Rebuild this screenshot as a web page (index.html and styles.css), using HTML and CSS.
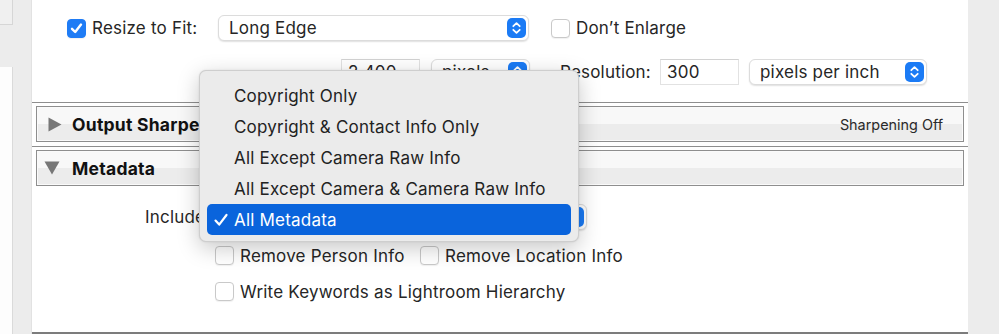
FILE: index.html
```html
<!DOCTYPE html>
<html>
<head>
<meta charset="utf-8">
<link rel="stylesheet" href="styles.css">
</head>
<body>
<div class="app">
  <div class="side-left">
    <div class="sl-top"></div>
    <div class="sl-mid"></div>
    <div class="sl-bottom"></div>
  </div>
  <div class="gutter"></div>
  <main class="panel">
    <div class="row row-resize">
      <span class="check checked"><svg viewBox="0 0 19 19" width="19" height="19"><path d="M5 9.8 L8.2 13 L14 5.6" fill="none" stroke="#fff" stroke-width="2.4" stroke-linecap="round" stroke-linejoin="round"/></svg></span>
      <span class="label label-resize">Resize to Fit:</span>
      <div class="select select-edge"><span class="select-text">Long Edge</span><span class="stepper"><svg viewBox="0 0 19 20" width="19" height="20"><path d="M6.3 8.2 L9.5 5.2 L12.7 8.2 M6.3 11.8 L9.5 14.8 L12.7 11.8" fill="none" stroke="#fff" stroke-width="1.8" stroke-linecap="round" stroke-linejoin="round"/></svg></span></div>
      <span class="check"></span>
      <span class="label">Don’t Enlarge</span>
    </div>
    <div class="row row-dims">
      <div class="field field-size">2,400</div>
      <div class="select select-unit"><span class="select-text">pixels</span><span class="stepper"><svg viewBox="0 0 19 20" width="19" height="20"><path d="M6.3 8.2 L9.5 5.2 L12.7 8.2 M6.3 11.8 L9.5 14.8 L12.7 11.8" fill="none" stroke="#fff" stroke-width="1.8" stroke-linecap="round" stroke-linejoin="round"/></svg></span></div>
      <span class="label label-res">Resolution:</span>
      <div class="field field-res">300</div>
      <div class="select select-ppi"><span class="select-text">pixels per inch</span><span class="stepper"><svg viewBox="0 0 19 20" width="19" height="20"><path d="M6.3 8.2 L9.5 5.2 L12.7 8.2 M6.3 11.8 L9.5 14.8 L12.7 11.8" fill="none" stroke="#fff" stroke-width="1.8" stroke-linecap="round" stroke-linejoin="round"/></svg></span></div>
    </div>
    <div class="rule rule-first"></div>
    <div class="section-head">
      <svg class="disclosure" viewBox="0 0 14 15" width="14" height="15"><path d="M0.5 0.5 L13.5 7.5 L0.5 14.5 Z" fill="#777"/></svg>
      <span class="section-title">Output Sharpening</span>
      <span class="section-summary">Sharpening Off</span>
    </div>
    <div class="rule rule-second"></div>
    <div class="section-head section-open">
      <svg class="disclosure disclosure-down" viewBox="0 0 16 14" width="16" height="14"><path d="M0.5 0.5 L15.5 0.5 L8 13.5 Z" fill="#777"/></svg>
      <span class="section-title">Metadata</span>
    </div>
    <div class="meta-body">
      <div class="row row-include">
        <span class="label label-include">Include:</span>
        <div class="select select-include"><span class="select-text select-text-hidden">All Metadata</span><span class="stepper"><svg viewBox="0 0 19 20" width="19" height="20"><path d="M6.3 8.2 L9.5 5.2 L12.7 8.2 M6.3 11.8 L9.5 14.8 L12.7 11.8" fill="none" stroke="#fff" stroke-width="1.8" stroke-linecap="round" stroke-linejoin="round"/></svg></span></div>
      </div>
      <div class="row row-opt row-opt1">
        <span class="check"></span>
        <span class="label label-person">Remove Person Info</span>
        <span class="check"></span>
        <span class="label">Remove Location Info</span>
      </div>
      <div class="row row-opt row-opt2">
        <span class="check"></span>
        <span class="label">Write Keywords as Lightroom Hierarchy</span>
      </div>
    </div>
    <div class="panel-bottom"></div>
  </main>
  <div class="side-right"></div>
</div>

<div class="menu">
  <div class="menu-item">Copyright Only</div>
  <div class="menu-item">Copyright &amp; Contact Info Only</div>
  <div class="menu-item">All Except Camera Raw Info</div>
  <div class="menu-item">All Except Camera &amp; Camera Raw Info</div>
  <div class="menu-item menu-item-selected"><svg class="menu-check" viewBox="0 0 16 16" width="16" height="16"><path d="M2.5 8.6 L6.2 12.6 L13.5 3" fill="none" stroke="#fff" stroke-width="2.2" stroke-linecap="round" stroke-linejoin="round"/></svg>All Metadata</div>
</div>
</body>
</html>
```

FILE: styles.css
```css
* { box-sizing: border-box; }

html, body {
  margin: 0;
  padding: 0;
  width: 999px;
  height: 334px;
  overflow: hidden;
  background: #ececec;
  font-family: "Inter", "Noto Sans", "Liberation Sans", sans-serif;
  color: #262626;
}

.app {
  display: flex;
  width: 999px;
  height: 334px;
}

.side-left {
  width: 13px;
  display: flex;
  flex-direction: column;
}
.sl-top {
  height: 25px;
  background: #f0f0f0;
  border-right: 1px solid #d6d6d6;
  border-bottom: 1px solid #d6d6d6;
}
.sl-mid {
  height: 42px;
  background: #ececec;
}
.sl-bottom {
  flex: 1;
  background: #fdfdfd;
  border-right: 1px solid #dadada;
}

.gutter {
  width: 18px;
  background: #ececec;
}

.panel {
  width: 937px;
  background: #fff;
  border-left: 1px solid #e2e2e2;
  display: flex;
  flex-direction: column;
}

.side-right {
  flex: 1;
  background: #ececec;
}

.row {
  display: flex;
  align-items: center;
  height: 26px;
  font-size: 17px;
  letter-spacing: 0.2px;
}

.row-resize {
  margin-top: 15px;
  padding-left: 35px;
}
.row-dims {
  margin-top: 18px;
  padding-left: 309px;
}

.label { white-space: nowrap; }

.check {
  width: 19px;
  height: 19px;
  flex: none;
  border: 1px solid #c9c9c9;
  border-radius: 4px;
  background: #fff;
  box-shadow: 0 1px 1px rgba(0,0,0,0.06);
  margin-right: 6px;
  display: flex;
}
.check.checked {
  background: #1f7cf5;
  border-color: #1f7cf5;
}
.check.checked svg { margin: -1px; }

.label-resize { width: 126px; }

.select {
  height: 26px;
  background: #fff;
  border: 1px solid #dcdcdc;
  border-radius: 6px;
  box-shadow: 0 1px 1.5px rgba(0,0,0,0.12);
  display: flex;
  align-items: center;
  justify-content: space-between;
  padding: 0 2px 0 10px;
}
.select-text { white-space: nowrap; }
.select-text-hidden { visibility: hidden; }
.stepper {
  width: 19px;
  height: 20px;
  border-radius: 5px;
  background: #1b7bf5;
  display: flex;
}
.select-edge { width: 311px; margin-right: 22px; }
.select-unit { width: 99px; margin-right: 30px; }
.select-ppi { width: 178px; }
.select-include { width: 371px; }

.field {
  height: 26px;
  background: #fff;
  border: 1px solid #e2e2e2;
  border-top-color: #d2d2d2;
  padding: 0 6px;
  display: flex;
  align-items: center;
}
.field-size { width: 79px; margin-right: 11px; }
.field-res { width: 79px; margin-right: 10px; }
.label-res { width: 100px; }

.rule {
  height: 1px;
  background: #8e8e8e;
  flex: none;
}
.rule-first { margin-top: 17px; }
.rule-second { margin-top: 4px; }

.section-head {
  margin: 3px 4px 0;
  height: 36px;
  border: 1px solid #8e8e8e;
  box-shadow: inset 0 0 0 1px #fafafa;
  background: linear-gradient(#f8f8f8 0, #f8f8f8 50%, #ececec 50%, #ececec 100%);
  display: flex;
  align-items: center;
  padding: 0 20px 0 11px;
  flex: none;
}
.section-open { margin-top: 3px; }
.disclosure { flex: none; margin-right: 10px; }
.disclosure-down { margin-left: -4px; margin-right: 12px; }
.section-title {
  font-weight: 700;
  font-size: 17.5px;
  letter-spacing: 0.25px;
  color: #111;
  white-space: nowrap;
}
.section-summary {
  margin-left: auto;
  font-size: 14.4px;
  color: #2a2a2a;
}

.meta-body {
  flex: 1;
  display: flex;
  flex-direction: column;
}
.row-include {
  margin-top: 18px;
  padding-left: 113px;
}
.label-include {
  width: 71px;
}
.row-opt { height: 19px; }
.row-opt1 { margin-top: 16px; padding-left: 183px; }
.row-opt2 { margin-top: 17px; padding-left: 183px; }
.label-person { width: 180px; }

.panel-bottom {
  height: 2px;
  background: #7c7c7c;
  flex: none;
}

/* popup menu overlays the include selector */
.menu {
  position: absolute;
  left: 199px;
  top: 70px;
  width: 380px;
  height: 172px;
  background: #ebebeb;
  border: 1px solid rgba(0,0,0,0.12);
  border-radius: 7px;
  box-shadow: 0 6px 22px rgba(0,0,0,0.22), 0 0 2px rgba(0,0,0,0.1);
  padding: 9px 7px 6px;
  font-size: 17px;
  letter-spacing: 0.2px;
  color: #222;
}
.menu-item {
  height: 31px;
  display: flex;
  align-items: center;
  padding-left: 27px;
  border-radius: 5px;
  white-space: nowrap;
}
.menu-item-selected {
  background: #0a64dc;
  color: #fff;
  padding-left: 6px;
}
.menu-check {
  flex: none;
  margin-right: 5px;
}
```
